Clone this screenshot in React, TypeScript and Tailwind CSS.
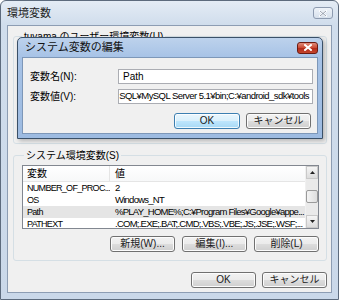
import type { ReactNode } from "react";

const font = "font-['Liberation_Sans','Noto_Sans_CJK_JP',sans-serif]";

function Btn({ children, primary, className = "" }: { children: ReactNode; primary?: boolean; className?: string }) {
  const look = primary
    ? "border-[#3c7fb1] bg-[linear-gradient(#eaf6fd_0%,#d9f0fc_50%,#bee6fd_50%,#a7d9f5_100%)] shadow-[inset_0_0_0_1px_#ffffffcc]"
    : "border-[#707070] bg-[linear-gradient(#f2f2f2_0%,#ebebeb_50%,#dddddd_50%,#cfcfcf_100%)] shadow-[inset_0_0_0_1px_#fcfcfc]";
  return (
    <div
      className={`flex h-[16px] w-[65px] shrink-0 items-center justify-center rounded-[3px] border text-[10px] leading-none text-[#1a1a1a] ${look} ${className}`}
    >
      {children}
    </div>
  );
}

function CloseX({ active }: { active?: boolean }) {
  return (
    <div
      className={
        active
          ? "flex h-[12px] w-[21px] items-center justify-center rounded-[3px] border border-[#6b1a12] bg-[linear-gradient(#e08c7c,#c9452e_50%,#b2291a_50%,#c4452c)]"
          : "flex h-[12px] w-[20px] items-center justify-center rounded-[3px] border border-[#8d9bb0] bg-[linear-gradient(#eef3f9,#d6e0ec)]"
      }
    >
      <svg width="8" height="7" viewBox="0 0 8 7">
        <path d="M1 1 L7 6 M7 1 L1 6" stroke="#ffffff" strokeWidth="2" strokeLinecap="square" />
        {!active && <path d="M1 1 L7 6 M7 1 L1 6" stroke="#7b8799" strokeWidth="0.8" fill="none" />}
      </svg>
    </div>
  );
}

const rows: [string, string, boolean?][] = [
  ["NUMBER_OF_PROC...", "2"],
  ["OS", "Windows_NT"],
  ["Path", "%PLAY_HOME%;C:¥Program Files¥Google¥appe...", true],
  ["PATHEXT", ".COM;.EXE;.BAT;.CMD;.VBS;.VBE;.JS;.JSE;.WSF;..."],
];

export default function App() {
  return (
    <div className={`${font} relative h-[300px] w-[339px] overflow-hidden bg-white text-[10px] text-black`}>
      {/* outer window: 環境変数 (inactive) */}
      <div className="flex h-[300px] w-[339px] flex-col rounded-t-[6px] border border-[#5d6b7d] bg-[linear-gradient(#e4ecf5,#d0ddec_24px,#cad8e9)]">
        <div className="flex h-[24px] items-center justify-between pl-[6px] pr-[5px]">
          <span className="text-[11px] text-[#222]">環境変数</span>
          <CloseX />
        </div>
        <div className="mx-[6px] mb-[6px] flex min-w-0 flex-1 flex-col border border-[#8d9db3] bg-[#f0f0f0] pl-[5px] pr-[4px]">
          <fieldset className="mt-[4px] h-[114px] min-w-0 rounded-[3px] border border-[#d5dfe5] px-[6px]">
            <legend className="ml-[2px] px-[2px] leading-[13px]">tuyama のユーザー環境変数(U)</legend>
          </fieldset>

          <fieldset className="mt-[5px] h-[112px] min-w-0 rounded-[3px] border border-[#d5dfe5] pl-[8px] pr-[7px]">
            <legend className="ml-[2px] px-[2px] leading-[13px]">システム環境変数(S)</legend>
            <div className="mt-[3px] flex h-[64px] min-w-0 overflow-hidden border border-[#828790] bg-white">
              <div className="min-w-0 flex-1 overflow-hidden">
                <div className="flex h-[16px] border-b border-[#e5e5e5] bg-[linear-gradient(#ffffff,#f7f8f9)]">
                  <div className="w-[87px] shrink-0 border-r border-[#e5e5e5] pl-[4px] leading-[16px]">変数</div>
                  <div className="flex-1 pl-[5px] leading-[16px]">値</div>
                </div>
                {rows.map(([k, v, sel]) => (
                  <div key={k} className={`flex h-[12px] leading-[12px] ${sel ? "bg-[#e5e5e5]" : ""}`}>
                    <div className="w-[87px] shrink-0 overflow-hidden whitespace-nowrap pl-[4px] text-[9px] tracking-[-0.7px]">{k}</div>
                    <div className="min-w-0 flex-1 overflow-hidden whitespace-nowrap pl-[5px] text-[9.5px] tracking-[-0.75px]">{v}</div>
                  </div>
                ))}
              </div>
              {/* scrollbar */}
              <div className="flex w-[13px] shrink-0 flex-col border-l border-[#f0f0f0] bg-[#eaeaea]">
                <div className="flex h-[13px] items-center justify-center border border-[#c9c9c9] bg-[linear-gradient(#f5f5f5,#dcdcdc)]">
                  <svg width="5" height="3" viewBox="0 0 5 3"><path d="M0 3 L2.5 0 L5 3Z" fill="#222" /></svg>
                </div>
                <div className="flex-1" />
                <div className="mb-[12px] h-[13px] rounded-[2px] border border-[#9a9a9a] bg-[linear-gradient(90deg,#f4f4f4,#dedede)]" />
                <div className="flex h-[13px] items-center justify-center border border-[#c9c9c9] bg-[linear-gradient(#f5f5f5,#dcdcdc)]">
                  <svg width="5" height="3" viewBox="0 0 5 3"><path d="M0 0 L2.5 3 L5 0Z" fill="#222" /></svg>
                </div>
              </div>
            </div>
            <div className="mt-[7px] flex justify-end gap-[7px]">
              <Btn>新規(W)...</Btn>
              <Btn>編集(I)...</Btn>
              <Btn>削除(L)</Btn>
            </div>
          </fieldset>

          <div className="mt-[11px] flex justify-end gap-[6px]">
            <Btn>OK</Btn>
            <Btn>キャンセル</Btn>
          </div>
        </div>
      </div>

      {/* active dialog: システム変数の編集 */}
      <div className="absolute left-[17px] top-[37px] flex h-[102px] w-[306px] flex-col rounded-t-[5px] border border-[#3a5068] bg-[linear-gradient(#bdd2ec,#a6c2e6_20px,#9dbbe1)] shadow-[2px_2px_4px_#00000040]">
        <div className="flex h-[19px] items-center justify-between pl-[7px] pr-[4px]">
          <span className="text-[11px] text-[#111]">システム変数の編集</span>
          <CloseX active />
        </div>
        <div className="mx-[4px] mb-[4px] flex flex-1 flex-col border border-[#7d97b8] bg-[#f0f0f0] pl-[7px] pr-[4px]">
          <div className="mt-[11px] flex h-[15px] items-center">
            <div className="w-[88px]">変数名(N):</div>
            <div className="flex h-[15px] flex-1 items-center border border-[#abadb3] bg-white pl-[4px]">Path</div>
          </div>
          <div className="mt-[5px] flex h-[15px] items-center">
            <div className="w-[88px]">変数値(V):</div>
            <div className="flex h-[15px] min-w-0 flex-1 items-center justify-end overflow-hidden whitespace-nowrap border border-[#abadb3] bg-white pr-[3px] text-[9.5px] tracking-[-0.55px]">
              SQL¥MySQL Server 5.1¥bin;C:¥android_sdk¥tools
            </div>
          </div>
          <div className="mt-[9px] flex justify-end gap-[6px] pr-[2px]">
            <Btn primary className="w-[66px]">OK</Btn>
            <Btn>キャンセル</Btn>
          </div>
        </div>
      </div>
    </div>
  );
}
